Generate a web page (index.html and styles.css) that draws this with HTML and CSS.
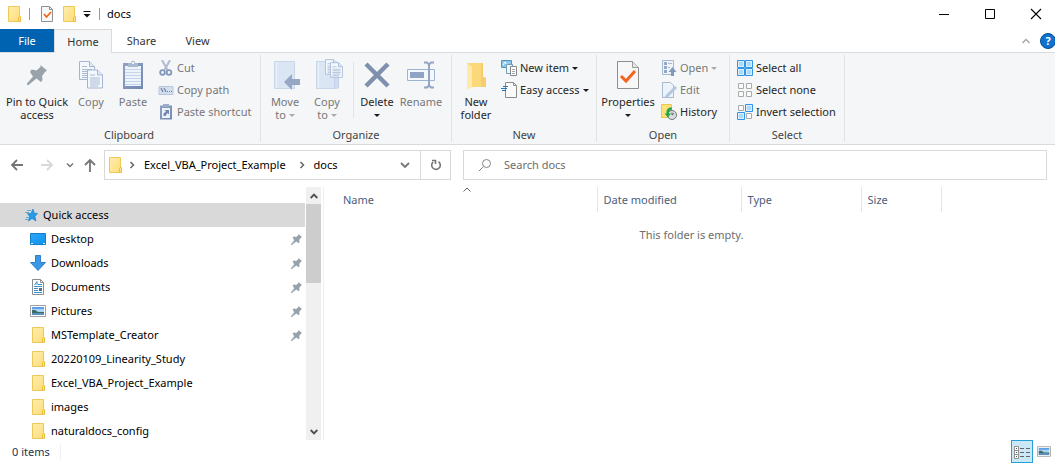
FILE: index.html
```
<!DOCTYPE html>
<html lang="en">
<head>
<meta charset="utf-8">
<title>docs</title>
<link rel="stylesheet" href="styles.css">
</head>
<body>
<svg class="defs" aria-hidden="true">
  <defs>
    <linearGradient id="gold" x1="0" y1="0" x2="1" y2="1"><stop offset="0" stop-color="#ffeeb0"/><stop offset="1" stop-color="#ffdd77"/></linearGradient>
    <linearGradient id="steel" x1="0" y1="0" x2="1" y2="1"><stop offset="0" stop-color="#8fa3c4"/><stop offset="1" stop-color="#7389b0"/></linearGradient>
    <linearGradient id="screen" x1="0" y1="0" x2="1" y2="1"><stop offset="0" stop-color="#2fa6f5"/><stop offset="1" stop-color="#0d92f0"/></linearGradient>
  </defs>
  <symbol id="folder" viewBox="0 0 16 16">
    <path d="M2.5.5h11v15h-11z" fill="url(#gold)" stroke="#eec95a"/>
    <path d="M12.5 15.500v-4l1-1h1v5z" fill="#ffe28a" stroke="#e8bd44"/>
  </symbol>
  <symbol id="pin" viewBox="0 0 20 20">
    <path d="M13.500 0 20 5.500l-2 1.500-3 4 .5 4-1.500 2-4.500-3.500-8 6.500H0v-1.500l6-7-3-4.500 1.500-2.500 5 1 4-3.500z" fill="#98a2ab"/>
  </symbol>
  <symbol id="sheet" viewBox="0 0 16 19">
    <path d="M.5.5h10l5 5v13H.5z" fill="#f4f8fd" stroke="#a3b5d1"/>
    <path d="M10.500.5v5h5" fill="#dfe8f5" stroke="#a3b5d1"/>
    <path d="M3 5.500h5M3 8.500h10M3 10.500h10M3 12.500h10M3 14.500h10M3 16.500h8" stroke="#a9bad5"/>
  </symbol>
  <symbol id="picture" viewBox="0 0 16 12">
    <path d="M.5.5h15v11H.5z" fill="#fff" stroke="#a0a0a0"/>
    <path d="M2 2h12v8H2z" fill="#a9d3f5"/><path d="M2 2h12v2H2z" fill="#5f9fe8"/>
    <path d="M2 5l3 0 3 2h6v1.500H2z" fill="#3f6b65"/><path d="M2 8h12v2H2z" fill="#5b8fbd"/>
  </symbol>
</svg>

<div class="window">
  <header class="titlebar">
    <svg class="i16" ><use href="#folder"/></svg>
    <span class="tick"></span>
    <div class="quick">
      <button aria-label="Properties"><svg class="i16" viewBox="0 0 16 16"><path d="M2.500.5h8l3 3v12h-11z" fill="#f8f8f8" stroke="#909090"/><path d="M10.500.5v3h3" fill="none" stroke="#909090"/><path d="M5 8l2.500 3 4.500-5" fill="none" stroke="#f1661f" stroke-width="1.800"/></svg></button>
      <button aria-label="New folder"><svg class="i16"><use href="#folder"/></svg></button>
      <button aria-label="Customize"><svg class="i8" viewBox="0 0 8 8"><path d="M.5 1.500h7" stroke="#111"/><path d="M.5 4h7L4 7.500z" fill="#111"/></svg></button>
    </div>
    <span class="tick"></span>
    <h1 class="title">docs</h1>
    <div class="controls">
      <button aria-label="Minimize"><svg viewBox="0 0 12 12"><path d="M1 6.500h10" stroke="#000"/></svg></button>
      <button aria-label="Maximize"><svg viewBox="0 0 12 12"><path d="M1.500 1.500h9v9h-9z" fill="none" stroke="#000"/></svg></button>
      <button aria-label="Close"><svg viewBox="0 0 12 12"><path d="M1 1l10 10M11 1 1 11" stroke="#000" stroke-width="1.100"/></svg></button>
    </div>
  </header>

  <nav class="tabs">
    <button class="tab file">File</button>
    <button class="tab active">Home</button>
    <button class="tab share">Share</button>
    <button class="tab view">View</button>
    <div class="tabs-end">
      <button aria-label="Collapse ribbon"><svg class="i8" viewBox="0 0 8 8"><path d="M.5 6 4 2.500 7.500 6" fill="none" stroke="#a6a6a6" stroke-width="1.400"/></svg></button>
      <button class="help" aria-label="Help">?</button>
    </div>
  </nav>

  <section class="ribbon">
    <div class="group clipboard">
      <div class="tools">
        <button class="big pin"><svg class="pin-big"><use href="#pin"/></svg><span>Pin to Quick<br>access</span></button>
        <button class="big copy" disabled><svg class="art" viewBox="0 0 32 32"><use href="#sheet" x="4" y="2" width="16" height="19"/><use href="#sheet" x="12" y="10" width="16" height="20"/></svg><span>Copy</span></button>
        <button class="big paste" disabled><svg class="art" viewBox="0 0 32 32"><path d="M6 4h20v26H6z" fill="url(#steel)"/><path d="M8 7h16v20H8z" fill="#edf3fb"/><path d="M8 10.500h16M8 13.500h16M8 16.500h16M8 19.500h16M8 22.500h16M8 25.500h16" stroke="#c5d6ec"/><path d="M11 8V4h3c0-3 4-3 4 0h3v4z" fill="#a8b8cf"/><path d="M15 3h2v2h-2z" fill="#f5f6f7"/></svg><span>Paste</span></button>
        <div class="stack">
          <button disabled><svg class="i16" viewBox="0 0 16 16"><path d="M4 0l5.500 10M12 0 6.500 10" stroke="#aebbd0" stroke-width="2"/><circle cx="4.500" cy="12.500" r="2.300" fill="none" stroke="#8397b8" stroke-width="1.800"/><circle cx="11" cy="12.500" r="2.300" fill="none" stroke="#8397b8" stroke-width="1.800"/></svg>Cut</button>
          <button disabled><svg class="i16" viewBox="0 0 16 16"><path d="M1 4.500h14v8H1z" fill="#d3dfef" stroke="#b7c6dd"/><path d="M3 6l2 4M6 6l2 4M9 9.500h1M11 9.500h1M13 9.500h1" stroke="#6f83a5" stroke-width="1.200"/></svg>Copy path</button>
          <button disabled><svg class="i16" viewBox="0 0 16 16"><path d="M2 1.500h12v14H2z" fill="url(#steel)"/><path d="M4 4h8v10H4z" fill="#edf3fb"/><path d="M5 0h6v3H5z" fill="#9badc9"/><path d="M5.500 12V9.500L8 7.500 6.500 6H11v4.500L9.500 9 7.500 12z" fill="#7288af"/></svg>Paste shortcut</button>
        </div>
      </div>
      <h2>Clipboard</h2>
    </div>

    <div class="group organize">
      <div class="tools">
        <button class="big mid" disabled><svg class="art" viewBox="0 0 32 32"><path d="M5.500 2.500h20v27h-20z" fill="#dbe6f4" stroke="#c9d7ea"/><path d="M7.500 3v26" stroke="#e9f0f9"/><path d="M15 23l8-8v5h8v6h-8v5z" fill="#96a7c4"/></svg><span>Move<br>to <i class="caret"></i></span></button>
        <button class="big mid" disabled><svg class="art" viewBox="0 0 32 32"><path d="M5.500 2.500h20v27h-20z" fill="#dbe6f4" stroke="#c9d7ea"/><path d="M7.500 3v26" stroke="#e9f0f9"/><path d="M23.500 29v-9l2-2h2v11z" fill="#d1deef" stroke="#c3d2e8"/><use href="#sheet" x="14" y="0" width="13" height="16"/><use href="#sheet" x="19" y="3" width="13" height="16"/></svg><span>Copy<br>to <i class="caret"></i></span></button>
        <span class="divider"></span>
        <button class="big delete"><svg class="art" viewBox="0 0 32 32"><path d="M5 5l22 22M27 5 5 27" stroke="#7f90ae" stroke-width="4.500"/></svg><span>Delete<br><i class="caret"></i></span></button>
        <button class="big mid" disabled><svg class="art" viewBox="0 0 32 32"><path d="M2.500 10.500h27v11h-27z" fill="#f4f8fd" stroke="#9fb3d2"/><path d="M5 13h14v6H5z" fill="#8fa3c4"/><path d="M19 3.500h3l2 2 2-2h3M24 5v22M19 28.500h3l2-2 2 2h3" fill="none" stroke="#92a5c4" stroke-width="2"/></svg><span>Rename</span></button>
      </div>
      <h2>Organize</h2>
    </div>

    <div class="group new">
      <div class="tools">
        <button class="big mid"><svg class="art" viewBox="0 0 32 32"><path d="M7 4h16v14l2 1v9H7z" fill="#fbd97b"/><path d="M21 4h2v14l3 1v9h-5z" fill="#f5cd6a"/><path d="M7 4l5 4v20l-4 3-1-2z" fill="#ffe9ab"/></svg><span>New<br>folder</span></button>
        <div class="stack">
          <button><svg class="i16" viewBox="0 0 16 16"><path d="M.5.5h10v7H.5z" fill="#8dc9ed" stroke="#5794b5"/><path d="M2 5l2-3 2 3" fill="none" stroke="#fff"/><path d="M5.500 4.500h6v9h-6z" fill="#eef7fc" stroke="#6f9cb4"/><path d="M9.500 6.500h6v9h-6z" fill="#fff" stroke="#888"/><path d="M11 9.500h3M11 11.500h3M11 13.500h3" stroke="#a6a6a6"/></svg>New item<i class="caret"></i></button>
          <button><svg class="i16" viewBox="0 0 16 16"><path d="M4.500.5h8l3 3v12h-11z" fill="#fafafa" stroke="#8c8c8c"/><path d="M12.500.5v3h3" fill="none" stroke="#8c8c8c"/><path d="M2 4.500h5M0 6.500h6M1 8.500h4" stroke="#2b74ad" stroke-width="1.200"/></svg>Easy access<i class="caret"></i></button>
        </div>
      </div>
      <h2>New</h2>
    </div>

    <div class="group open">
      <div class="tools">
        <button class="big props"><svg class="art" viewBox="0 0 32 32"><path d="M5.500 2.500h15l6 6v21h-21z" fill="#f7f7f7" stroke="#8f8f8f"/><path d="M20.500 2.500v6h6" fill="#e4e4e4" stroke="#9b9b9b"/><path d="M9 17l5 5 9-10" fill="none" stroke="#f5641e" stroke-width="3"/></svg><span>Properties<br><i class="caret"></i></span></button>
        <div class="stack">
          <button disabled><svg class="i16" viewBox="0 0 16 16"><path d="M1.500.5h11v14h-11z" fill="#eef3fa" stroke="#a9b9d2"/><path d="M3 2h3v3H3zM3 6h3v3H3zM3 10h3v3H3z" fill="#94a8c9"/><path d="M7 3.500h4M7 7.500h2" stroke="#a9b9d2"/><path d="M11.500 7l4 5h-2.500v4h-3v-4H7.500z" fill="#8398bb"/></svg>Open<i class="caret"></i></button>
          <button disabled><svg class="i16" viewBox="0 0 16 16"><path d="M1.500.5h8l3 3v12h-11z" fill="#edf3fa" stroke="#a9b9d2"/><path d="M14 4 5 13l-2 3 4-1L16 6z" fill="#b3c5df"/></svg>Edit</button>
          <button><svg class="i16" viewBox="0 0 16 16"><path d="M.5.500h10v13H.500z" fill="#ffe17a" stroke="#efc64c"/><circle cx="11" cy="11" r="4.500" fill="#d9dcdc" stroke="#707b80"/><path d="M11 8.500V11l2-1.500" fill="none" stroke="#5c666b"/><path d="M11 3.500c-4-.5-6 2-5.500 6H3.500l3.500 4 3-4H8c0-2 .5-3.500 3-4z" fill="#26a64a"/></svg>History</button>
        </div>
      </div>
      <h2>Open</h2>
    </div>

    <div class="group select">
      <div class="tools">
        <div class="stack">
          <button><svg class="i16" viewBox="0 0 16 16"><path d="M.5.5h7v7h-7zM8.500.5h7v7h-7zM.5 8.500h7v7h-7zM8.500 8.500h7v7h-7z" fill="#d9effd" stroke="#3294e4"/><path d="M2 2h4v4H2zM10 2h4v4h-4zM2 10h4v4H2zM10 10h4v4h-4z" fill="#a9dafb"/></svg>Select all</button>
          <button><svg class="i16" viewBox="0 0 16 16"><path d="M1.500 1.500h5v5h-5zM9.500 1.500h5v5h-5zM1.500 9.500h5v5h-5zM9.500 9.500h5v5h-5z" fill="#fafafa" stroke="#aaa"/></svg>Select none</button>
          <button><svg class="i16" viewBox="0 0 16 16"><path d="M1.500 1.500h5v5h-5zM9.500 9.500h5v5h-5z" fill="#fafafa" stroke="#aaa"/><path d="M8.500.5h7v7h-7zM.5 8.500h7v7h-7z" fill="#d9effd" stroke="#3294e4"/><path d="M10 2h4v4h-4zM2 10h4v4H2z" fill="#a9dafb"/></svg>Invert selection</button>
        </div>
      </div>
      <h2>Select</h2>
    </div>
  </section>

  <div class="location">
    <div class="history">
      <button aria-label="Back"><svg class="i14" viewBox="0 0 14 14"><path d="M13 7H2M7 2 2 7l5 5" fill="none" stroke="#757575" stroke-width="1.800"/></svg></button>
      <button aria-label="Forward"><svg class="i14" viewBox="0 0 14 14"><path d="M1 7h11M7 2l5 5-5 5" fill="none" stroke="#d9d9d9" stroke-width="1.800"/></svg></button>
      <button aria-label="Recent"><svg class="i8" viewBox="0 0 8 8"><path d="M1 2.500l3 3 3-3" fill="none" stroke="#757575" stroke-width="1.500"/></svg></button>
      <button aria-label="Up"><svg class="i14" viewBox="0 0 14 14"><path d="M7 14V2M2 7l5-5 5 5" fill="none" stroke="#757575" stroke-width="1.800"/></svg></button>
    </div>
    <div class="address">
      <svg class="i16"><use href="#folder"/></svg>
      <svg class="i8" viewBox="0 0 8 8"><path d="M2.500 1l3 3-3 3" fill="none" stroke="#666" stroke-width="1.500"/></svg>
      <a href="#project">Excel_VBA_Project_Example</a>
      <svg class="i8" viewBox="0 0 8 8"><path d="M2.500 1l3 3-3 3" fill="none" stroke="#666" stroke-width="1.500"/></svg>
      <a href="#docs">docs</a>
      <button class="previous" aria-label="Previous locations"><svg class="i10" viewBox="0 0 10 10"><path d="M1 3l4 4 4-4" fill="none" stroke="#757575" stroke-width="1.800"/></svg></button>
      <button class="refresh" aria-label="Refresh"><svg class="i12" viewBox="0 0 12 12"><path d="M8.500 2.600A4.300 4.300 0 1 1 3 3M2 1.500H5.500V5" fill="none" stroke="#757575" stroke-width="1.600"/></svg></button>
    </div>
    <label class="search">
      <svg class="i14" viewBox="0 0 14 14"><circle cx="8.500" cy="5.500" r="4" fill="none" stroke="#858585"/><path d="M5.500 8.500 1 13" stroke="#858585"/></svg>
      <input type="search" placeholder="Search docs" aria-label="Search docs">
    </label>
  </div>

  <main class="body">
    <nav class="tree">
      <a class="root" href="#quick"><svg class="i14" viewBox="0 0 14 14"><path d="M9 1l1 4 3.500.5-2.500 3 1 4.500-4-2.500L4.500 13l1-4.500L3.500 5.500H7z" fill="#279be8" stroke="#1478bd" stroke-width=".6"/><path d="M3 2.500h4M1 4.500h4M2 9.500h3M1 11.500h3" stroke="#57aee6"/></svg>Quick access</a>
      <a href="#desktop"><svg class="i16" viewBox="0 0 16 16"><path d="M.5 2.500h15v11H.5z" fill="url(#screen)" stroke="#137fc7"/><path d="M1 12.500h2M13 12.500h2" stroke="#d8f0ff"/></svg>Desktop<svg class="pinned"><use href="#pin"/></svg></a>
      <a href="#downloads"><svg class="i16" viewBox="0 0 16 16"><path d="M5.500.5h5v7h5L8 15.500.5 7.500h5z" fill="#3b96e6" stroke="#2d80c9"/></svg>Downloads<svg class="pinned"><use href="#pin"/></svg></a>
      <a href="#documents"><svg class="i16" viewBox="0 0 16 16"><path d="M2.500.5h8l3 3v12h-11z" fill="#fff" stroke="#8d8d8d"/><path d="M10.500.5v3h3" fill="none" stroke="#8d8d8d"/><path d="M4.500 6 7 2.500V6M8 5.500h4M4 7.500h8M4 9.500h4M4 11.500h4M4 13.500h8" fill="none" stroke="#3293ce"/><path d="M9 9h3v3H9z" fill="#52728b"/></svg>Documents<svg class="pinned"><use href="#pin"/></svg></a>
      <a href="#pictures"><svg class="i16" viewBox="0 0 16 16"><use href="#picture" y="2" width="16" height="12"/></svg>Pictures<svg class="pinned"><use href="#pin"/></svg></a>
      <a href="#mst"><svg class="i16"><use href="#folder"/></svg>MSTemplate_Creator<svg class="pinned"><use href="#pin"/></svg></a>
      <a href="#linearity"><svg class="i16"><use href="#folder"/></svg>20220109_Linearity_Study</a>
      <a href="#project"><svg class="i16"><use href="#folder"/></svg>Excel_VBA_Project_Example</a>
      <a href="#images"><svg class="i16"><use href="#folder"/></svg>images</a>
      <a href="#naturaldocs"><svg class="i16"><use href="#folder"/></svg>naturaldocs_config</a>
    </nav>
    <div class="scrollbar">
      <button aria-label="Scroll up"><svg class="i8" viewBox="0 0 8 8"><path d="M.7 6 4 2.700 7.300 6" fill="none" stroke="#505050" stroke-width="1.900"/></svg></button>
      <div class="track"><div class="thumb"></div></div>
      <button aria-label="Scroll down"><svg class="i8" viewBox="0 0 8 8"><path d="M.7 2 4 5.300 7.300 2" fill="none" stroke="#505050" stroke-width="1.900"/></svg></button>
    </div>
    <section class="listing">
      <table class="columns">
        <thead><tr>
          <th class="c-name">Name<svg class="sort" viewBox="0 0 8 5"><path d="M.5 4.500 4 1l3.500 3.500" fill="none" stroke="#666"/></svg></th>
          <th class="c-date">Date modified</th><th class="c-type">Type</th><th class="c-size">Size</th>
        </tr></thead>
      </table>
      <p class="empty">This folder is empty.</p>
    </section>
  </main>

  <footer class="status">
    <span>0 items</span>
    <div class="views">
      <button class="chosen" aria-label="Details"><svg class="i16" viewBox="0 0 16 16"><path d="M.5 2.500h4v4h-4zM.5 6.500h4v4h-4zM.5 10.500h4v4h-4z" fill="#fff" stroke="#8f8f8f"/><path d="M2 4.500h1M2 8.500h1M2 12.500h1" stroke="#555"/><path d="M6 4.500h4M12 4.500h4M6 8.500h4M12 8.500h4M6 12.500h4M12 12.500h4" stroke="#646464"/></svg></button>
      <button aria-label="Large icons"><svg class="thumbs"><use href="#picture"/></svg></button>
    </div>
  </footer>
</div>
</body>
</html>
```
FILE: styles.css
```
* { box-sizing: border-box; }
body { margin: 0; background: #fff; color: #000; font: 11px/16px "Noto Sans", "Open Sans", sans-serif; }
button { margin: 0; padding: 0; border: 0; background: none; color: inherit; font: inherit; white-space: nowrap; }
a { color: inherit; text-decoration: none; }
svg { display: block; flex: none; }
h1, h2, p { margin: 0; font-size: 11px; font-weight: 400; }
.defs { position: absolute; width: 0; height: 0; }
.i8 { width: 8px; height: 8px; }
.i10 { width: 10px; height: 10px; }
.i12 { width: 12px; height: 12px; }
.i14 { width: 14px; height: 14px; }
.i16 { width: 16px; height: 16px; }
.window { display: flex; flex-direction: column; height: 100vh; overflow: hidden; }

.titlebar { display: flex; align-items: center; height: 28px; flex: none; margin-bottom: 1px; padding-left: 6px; }
.titlebar .tick { width: 1px; height: 12px; margin-left: 7px; background: #999; }
.quick { display: flex; align-items: center; gap: 6px; margin: 0 1px 0 9px; }
.title { margin-left: 7px; }
.controls { display: flex; gap: 8px; margin-left: auto; }
.controls button { display: grid; place-items: center; width: 38px; height: 28px; }
.controls svg { width: 12px; height: 12px; }

.tabs { display: flex; height: 24px; flex: none; border-bottom: 1px solid #dadbdc; color: #333; }
.tab { display: grid; place-items: center; }
.tab.file { width: 54px; background: #0063b1; color: #fff; }
.tab.active { width: 58px; height: 24px; border: 1px solid #dadbdc; border-bottom: 0; background: #f5f6f7; }
.tab.share { width: 59px; }
.tab.view { width: 53px; }
.tabs-end { display: flex; align-items: center; gap: 10px; margin-left: auto; }
.help { width: 16px; height: 16px; margin-right: -1px; border: 1px solid #004f93; border-radius: 50%; background: #1071ce; color: #fff; font-weight: 700; line-height: 14px; }

.ribbon { display: flex; flex: none; padding: 2px 0; border-bottom: 1px solid #dadbdc; background: #f5f6f7; color: #262626; }
.group { display: flex; flex-direction: column; padding-left: 3px; border-right: 1px solid #e2e3e4; }
.group.clipboard { width: 261px; padding-left: 1px; }
.group.organize { width: 191px; }
.group.new { width: 145px; }
.group.open { width: 133px; }
.group.select { width: 115px; }
.tools { display: flex; height: 72px; }
.group h2 { margin-left: -3px; color: #444; line-height: 15px; text-align: center; }
.big { display: flex; flex-direction: column; align-items: center; height: 70px; padding-top: 4px; line-height: 13px; text-align: center; }
.big > span { padding-top: 4px; }
.big.pin { width: 72px; }
.big.copy { width: 36px; }
.big.paste { width: 48px; }
.big.mid { width: 42px; }
.big.delete { width: 46px; }
.big.props { width: 56px; }
.art { width: 32px; height: 32px; }
.pin-big { width: 20px; height: 20px; margin: 6px 0; }
button:disabled { color: #777; }
.caret { display: inline-block; margin-bottom: 2px; border: 3px solid transparent; border-top-color: #1b1b1b; border-bottom: 0; }
button:disabled .caret { border-top-color: #aaa; }
.divider { width: 1px; height: 56px; margin: 7px 0 0 5px; background: #e2e3e4; }
.stack { display: flex; flex-direction: column; padding: 2px 0 0 4px; }
.stack button { display: flex; align-items: center; gap: 3px; height: 22px; }
.clipboard .stack { padding-left: 1px; }
.open .stack { padding-left: 5px; }
.stack .caret { margin: 0; }

.location { display: flex; align-items: center; flex: none; padding: 5px 8px 7px 10px; }
.history { display: flex; align-items: center; width: 94px; gap: 12px; }
.history button:first-child { margin-right: 4px; }
.history button:last-child { margin-left: -3px; }
.address { display: flex; align-items: center; width: 347px; height: 30px; border: 1px solid #d9d9d9; padding-left: 2px; }
.address > .i8 { margin: 0 8px 0 5px; }
.address a + .i8 { margin-left: 12px; }
.previous { margin: 0 10px 0 auto; }
.refresh { display: grid; place-items: center; width: 30px; height: 28px; border-left: 1px solid #d9d9d9; }
.search { display: flex; align-items: center; flex: 1; height: 30px; margin-left: 12px; padding-left: 14px; border: 1px solid #d9d9d9; }
.search input { flex: 1; min-width: 0; margin-left: 12px; padding: 0; border: 0; outline: 0; background: none; color: #000; font: inherit; }
.search input::placeholder { color: #6d6d6d; opacity: 1; }

.body { display: flex; flex: 1; min-height: 0; }
.tree { width: 305px; margin-right: 1px; padding-top: 16px; overflow: hidden; }
.tree a { display: flex; align-items: center; gap: 5px; height: 24px; padding: 0 3px 0 30px; }
.tree .root { padding-left: 24px; background: #d9d9d9; }
.pinned { width: 11px; height: 11px; margin-left: auto; }
.scrollbar { display: flex; flex-direction: column; width: 15px; background: #f0f0f0; }
.scrollbar button { display: grid; place-items: center; height: 17px; }
.track { flex: 1; }
.thumb { height: 36%; background: #cdcdcd; }
.listing { flex: 1; margin-left: 2px; border-left: 1px solid #f0f0f0; }
.columns { border-collapse: collapse; table-layout: fixed; width: 617px; color: #4c607a; }
.columns th { position: relative; height: 25px; padding: 0 0 0 6px; border-right: 1px solid #e5e5e5; font-weight: 400; text-align: left; }
.columns .c-name { width: 273px; padding-left: 19px; }
.columns .c-date { width: 144px; }
.columns .c-type { width: 120px; }
.columns .c-size { width: 80px; }
.sort { position: absolute; top: 0; left: 139px; width: 8px; height: 5px; }
.empty { margin-top: 15px; padding-left: 4px; color: #6d6d6d; text-align: center; }

.status { display: flex; align-items: center; flex: none; height: 23px; padding: 0 4px 0 12px; color: #26344f; }
.status > span { padding-right: 10px; border-right: 1px solid #f0f0f0; }
.views { display: flex; align-items: center; gap: 4px; margin-left: auto; }
.views .chosen { display: grid; place-items: center; width: 22px; height: 23px; border: 1px solid #26a0da; background: #cbe8f6; }
.thumbs { width: 14px; height: 11px; }
```
